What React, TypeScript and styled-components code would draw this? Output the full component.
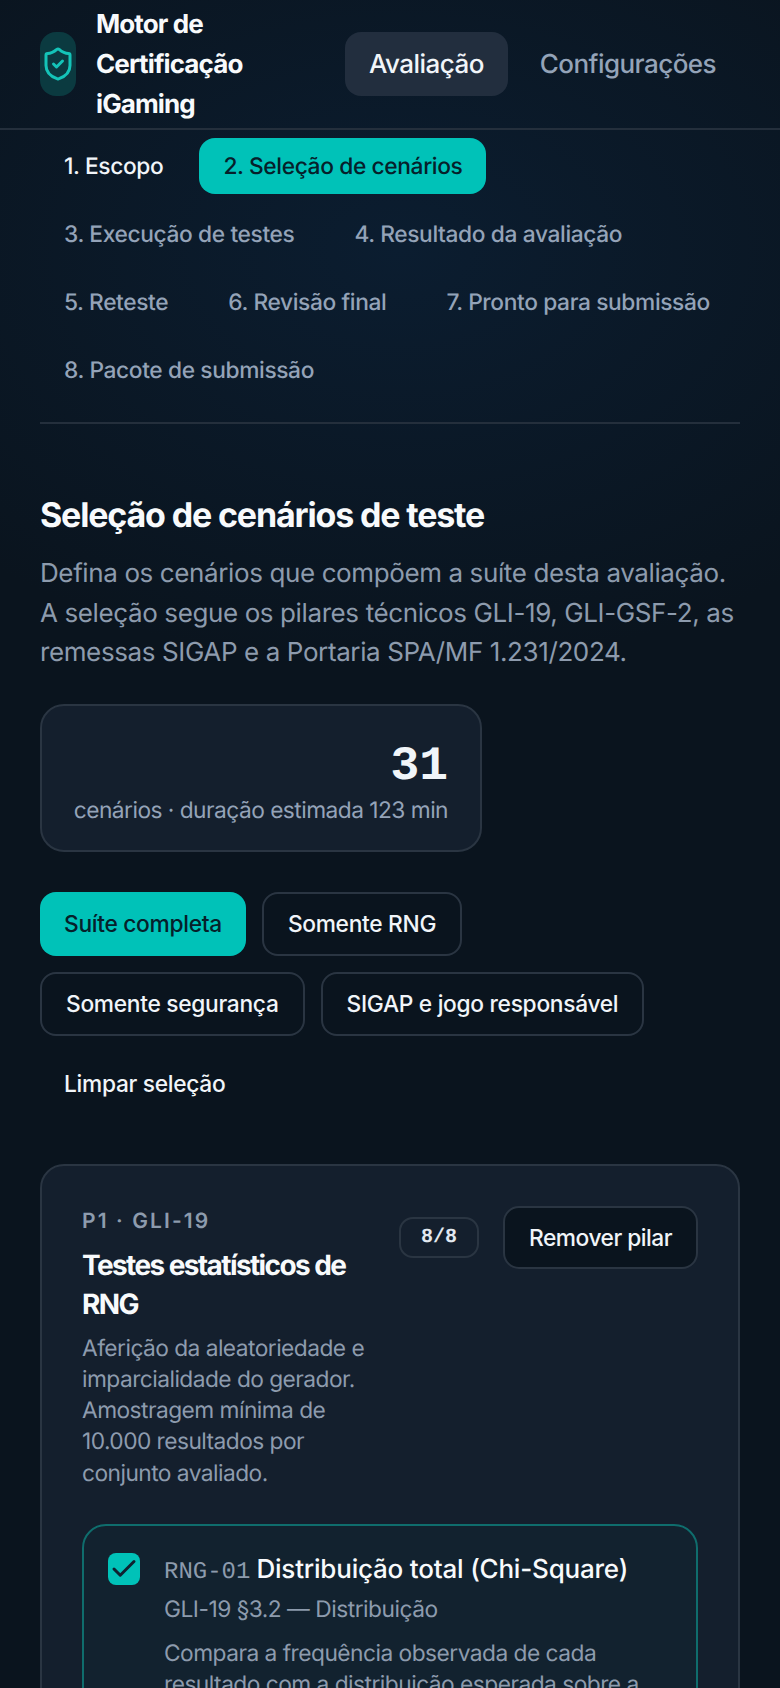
import { Check, ShieldCheck } from "lucide-react";
import styled, { createGlobalStyle } from "styled-components";

const GlobalStyle = createGlobalStyle`
  html, body {
    margin: 0;
    padding: 0;
    background: #0a141e;
  }
  * {
    box-sizing: border-box;
  }
  body {
    font-family: Inter, "Liberation Sans", sans-serif;
    color: #f1f5f9;
    text-rendering: geometricPrecision;
  }
`;

const mono = `"Liberation Mono", "DejaVu Sans Mono", monospace`;

const Page = styled.div`
  width: 780px;
  height: 1688px;
  overflow: hidden;
  background:
    radial-gradient(ellipse 620px 420px at 400px 250px, #0b1d30 0%, rgba(11, 29, 48, 0) 100%),
    #0a141e;
`;

const Header = styled.header`
  display: flex;
  align-items: center;
  justify-content: space-between;
  height: 130px;
  padding: 0 40px;
  border-bottom: 2px solid #242f3c;
`;

const Brand = styled.div`
  display: flex;
  align-items: center;
  gap: 20px;
`;

const LogoMark = styled.div`
  display: flex;
  align-items: center;
  justify-content: center;
  width: 36px;
  height: 64px;
  border-radius: 16px;
  background: #0b3a40;
  color: #14c4b8;
`;

const BrandName = styled.div`
  width: 170px;
  padding-top: 2px;
  font-size: 26px;
  font-weight: 700;
  line-height: 40.3px;
  letter-spacing: -0.9px;
  color: #f8fafc;
`;

const Nav = styled.nav`
  display: flex;
  gap: 8px;
`;

const NavLink = styled.a<{ $active?: boolean }>`
  display: flex;
  align-items: center;
  height: 64px;
  padding: 0 24px;
  border-radius: 16px;
  font-size: 26px;
  font-weight: 500;
  letter-spacing: -0.55px;
  color: ${({ $active }) => ($active ? "#f1f5f9" : "#94a3b8")};
  background: ${({ $active }) => ($active ? "#222e3e" : "transparent")};
`;

const Main = styled.main`
  padding: 8px 40px 0;
`;

const Steps = styled.div`
  display: flex;
  flex-wrap: wrap;
  gap: 12px;
  padding-bottom: 24px;
  border-bottom: 2px solid #242f3c;
`;

const Step = styled.a<{ $state?: "done" | "active" }>`
  display: flex;
  align-items: center;
  height: 56px;
  padding: 0 24px;
  border-radius: 16px;
  font-size: 22.75px;
  font-weight: 500;
  letter-spacing: -0.38px;
  color: ${({ $state }) =>
    $state === "active" ? "#06202a" : $state === "done" ? "#f1f5f9" : "#94a3b8"};
  background: ${({ $state }) => ($state === "active" ? "#00c2b8" : "transparent")};
`;

const Title = styled.h1`
  margin: 68px 0 0;
  font-size: 34px;
  font-weight: 700;
  line-height: 48px;
  letter-spacing: -1.16px;
  color: #f8fafc;
`;

const Lead = styled.p`
  margin: 14px 0 0;
  font-size: 26px;
  line-height: 39.5px;
  letter-spacing: -0.39px;
  color: #8d9bad;
`;

const Summary = styled.div`
  display: flex;
  flex-direction: column;
  align-items: flex-end;
  width: 442px;
  height: 148px;
  margin-top: 31px;
  padding: 32px;
  border: 2px solid #2a3542;
  border-radius: 24px;
  background: #141f2d;
`;

const Count = styled.div`
  margin-top: 7px;
  font-family: ${mono};
  font-size: 48px;
  font-weight: 700;
  line-height: 44px;
  color: #f1f5f9;
`;

const CountNote = styled.div`
  margin-top: 6px;
  font-size: 22.75px;
  line-height: 32px;
  letter-spacing: -0.54px;
  white-space: nowrap;
  color: #94a3b8;
`;

const Presets = styled.div`
  display: flex;
  flex-wrap: wrap;
  gap: 16px;
  margin-top: 40px;
`;

const Preset = styled.button<{ $variant?: "primary" | "ghost" }>`
  height: 64px;
  padding: 0 24px;
  border: ${({ $variant }) => ($variant ? "none" : "2px solid #2a3542")};
  border-radius: 16px;
  font-family: inherit;
  font-size: 22.75px;
  font-weight: 500;
  letter-spacing: -0.3px;
  color: ${({ $variant }) => ($variant === "primary" ? "#06202a" : "#f1f5f9")};
  background: ${({ $variant }) => ($variant === "primary" ? "#00c2b8" : "transparent")};
`;

const Pillar = styled.section`
  margin-top: 48px;
  padding: 40px;
  border: 2px solid #2a3542;
  border-radius: 24px;
  background: #141f2d;
`;

const PillarHead = styled.div`
  display: flex;
  align-items: flex-start;
  gap: 16px;
`;

const PillarInfo = styled.div`
  flex: 1;
`;

const PillarCode = styled.div`
  font-size: 21px;
  font-weight: 600;
  line-height: 32px;
  letter-spacing: 2.1px;
  color: #8d9bad;
`;

const PillarTitle = styled.h2`
  margin: 8px 0 0;
  font-size: 28px;
  font-weight: 700;
  line-height: 39px;
  letter-spacing: -1.6px;
  color: #f8fafc;
`;

const PillarText = styled.p`
  margin: 9px 0 0;
  font-size: 22.75px;
  line-height: 31.25px;
  letter-spacing: -0.55px;
  color: #8d9bad;
`;

const PillarActions = styled.div`
  display: flex;
  align-items: center;
  gap: 24px;
`;

const CountBadge = styled.span`
  display: flex;
  align-items: center;
  justify-content: center;
  width: 80px;
  height: 41px;
  border: 2px solid #2a3542;
  border-radius: 14px;
  font-family: ${mono};
  font-size: 20px;
  font-weight: 700;
  color: #e2e8f0;
`;

const RemoveButton = styled.button`
  height: 63px;
  padding: 0 24px;
  border: 2px solid #2a3542;
  border-radius: 16px;
  font-family: inherit;
  font-size: 22.75px;
  font-weight: 500;
  letter-spacing: -0.5px;
  color: #f1f5f9;
  background: #0a141e;
`;

const Scenario = styled.label`
  display: flex;
  gap: 24px;
  margin-top: 35px;
  padding: 26px 24px 24px;
  border: 2px solid #0f6d6d;
  border-radius: 24px;
  background: #12222f;
`;

const Tick = styled.span`
  display: flex;
  align-items: center;
  justify-content: center;
  flex: none;
  width: 32px;
  height: 32px;
  margin-top: 1px;
  border-radius: 8px;
  color: #0f2230;
  background: #00c2b8;
`;

const ScenarioBody = styled.div`
  min-width: 0;
`;

const ScenarioTitle = styled.div`
  font-size: 26px;
  font-weight: 500;
  line-height: 36px;
  letter-spacing: -0.2px;
  color: #f8fafc;
`;

const ScenarioCode = styled.span`
  margin-right: 6px;
  font-family: ${mono};
  font-size: 24px;
  font-weight: 400;
  letter-spacing: 0;
  color: #8d9bad;
`;

const ScenarioRef = styled.div`
  margin-top: 3px;
  font-size: 22.75px;
  line-height: 32px;
  letter-spacing: -0.5px;
  color: #8d9bad;
`;

const ScenarioText = styled.p`
  margin: 12px 0 0;
  font-size: 22.75px;
  line-height: 31.25px;
  letter-spacing: -0.53px;
  color: #8d9bad;
`;

const steps = [
  "1. Escopo",
  "2. Seleção de cenários",
  "3. Execução de testes",
  "4. Resultado da avaliação",
  "5. Reteste",
  "6. Revisão final",
  "7. Pronto para submissão",
  "8. Pacote de submissão",
];

const presets = ["Suíte completa", "Somente RNG", "Somente segurança", "SIGAP e jogo responsável"];

export default function App() {
  return (
    <Page>
      <GlobalStyle />
      <Header>
        <Brand>
          <LogoMark>
            <ShieldCheck size={36} strokeWidth={2} />
          </LogoMark>
          <BrandName>Motor de Certificação iGaming</BrandName>
        </Brand>
        <Nav>
          <NavLink $active>Avaliação</NavLink>
          <NavLink>Configurações</NavLink>
        </Nav>
      </Header>
      <Main>
        <Steps>
          {steps.map((step, i) => (
            <Step key={step} $state={i === 0 ? "done" : i === 1 ? "active" : undefined}>
              {step}
            </Step>
          ))}
        </Steps>
        <Title>Seleção de cenários de teste</Title>
        <Lead>
          Defina os cenários que compõem a suíte desta avaliação. A seleção segue os pilares técnicos
          GLI-19, GLI-GSF-2, as remessas SIGAP e a Portaria SPA/MF 1.231/2024.
        </Lead>
        <Summary>
          <Count>31</Count>
          <CountNote>cenários · duração estimada 123 min</CountNote>
        </Summary>
        <Presets>
          {presets.map((preset, i) => (
            <Preset key={preset} $variant={i === 0 ? "primary" : undefined}>
              {preset}
            </Preset>
          ))}
          <Preset $variant="ghost">Limpar seleção</Preset>
        </Presets>
        <Pillar>
          <PillarHead>
            <PillarInfo>
              <PillarCode>P1 · GLI-19</PillarCode>
              <PillarTitle>Testes estatísticos de RNG</PillarTitle>
              <PillarText>
                Aferição da aleatoriedade e imparcialidade do gerador. Amostragem mínima de 10.000
                resultados por conjunto avaliado.
              </PillarText>
            </PillarInfo>
            <PillarActions>
              <CountBadge>8/8</CountBadge>
              <RemoveButton>Remover pilar</RemoveButton>
            </PillarActions>
          </PillarHead>
          <Scenario>
            <Tick>
              <Check size={30} strokeWidth={2.4} />
            </Tick>
            <ScenarioBody>
              <ScenarioTitle>
                <ScenarioCode>RNG-01</ScenarioCode>
                Distribuição total (Chi-Square)
              </ScenarioTitle>
              <ScenarioRef>GLI-19 §3.2 — Distribuição</ScenarioRef>
              <ScenarioText>
                Compara a frequência observada de cada resultado com a distribuição esperada sobre a
                amostra avaliada.
              </ScenarioText>
            </ScenarioBody>
          </Scenario>
        </Pillar>
      </Main>
    </Page>
  );
}
